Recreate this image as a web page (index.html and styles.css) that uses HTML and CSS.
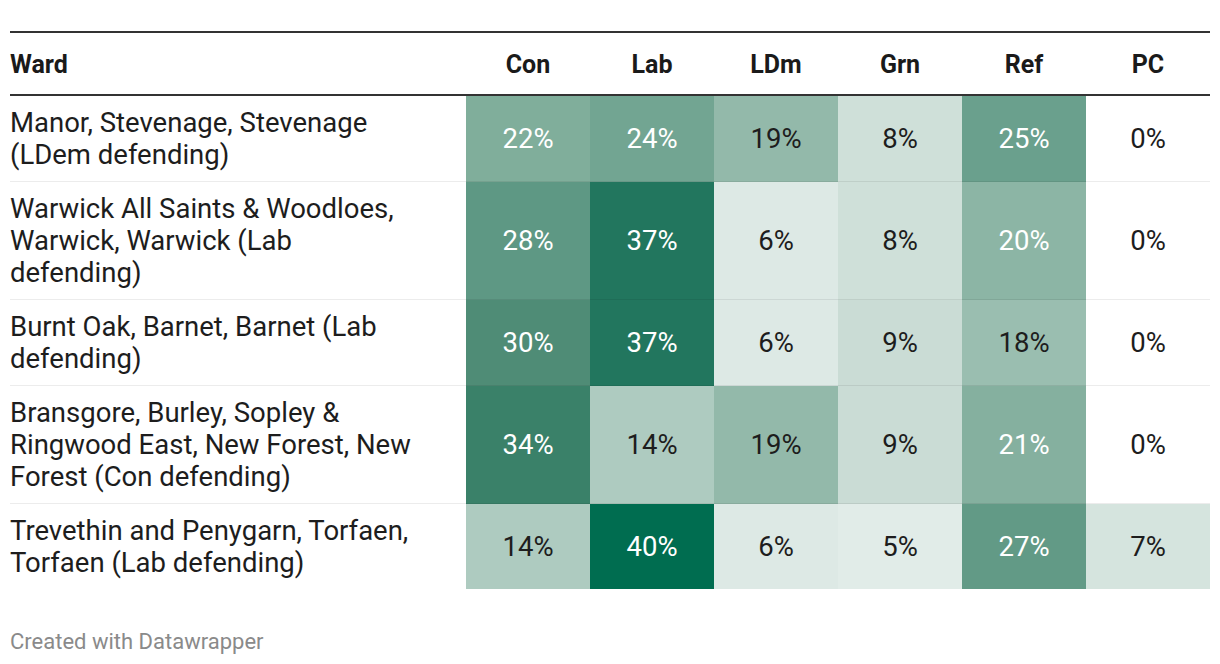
FILE: index.html
```html
<!DOCTYPE html>
<html>
<head>
<meta charset="utf-8">
<link rel="stylesheet" href="styles.css">
</head>
<body>
<div class="chart">
  <table class="tbl">
    <thead>
      <tr>
        <th class="ward">Ward</th>
        <th>Con</th>
        <th>Lab</th>
        <th>LDm</th>
        <th>Grn</th>
        <th>Ref</th>
        <th>PC</th>
      </tr>
    </thead>
    <tbody>
      <tr>
        <td class="ward">Manor, Stevenage, Stevenage (LDem defending)</td>
        <td class="c22 lt">22%</td>
        <td class="c24 lt">24%</td>
        <td class="c19">19%</td>
        <td class="c8">8%</td>
        <td class="c25 lt">25%</td>
        <td class="c0">0%</td>
      </tr>
      <tr>
        <td class="ward">Warwick All Saints &amp; Woodloes, Warwick, Warwick (Lab defending)</td>
        <td class="c28 lt">28%</td>
        <td class="c37 lt">37%</td>
        <td class="c6">6%</td>
        <td class="c8">8%</td>
        <td class="c20 lt">20%</td>
        <td class="c0">0%</td>
      </tr>
      <tr>
        <td class="ward">Burnt Oak, Barnet, Barnet (Lab defending)</td>
        <td class="c30 lt">30%</td>
        <td class="c37 lt">37%</td>
        <td class="c6">6%</td>
        <td class="c9">9%</td>
        <td class="c18">18%</td>
        <td class="c0">0%</td>
      </tr>
      <tr>
        <td class="ward">Bransgore, Burley, Sopley &amp; Ringwood East, New Forest, New Forest (Con defending)</td>
        <td class="c34 lt">34%</td>
        <td class="c14">14%</td>
        <td class="c19">19%</td>
        <td class="c9">9%</td>
        <td class="c21 lt">21%</td>
        <td class="c0">0%</td>
      </tr>
      <tr class="last">
        <td class="ward">Trevethin and Penygarn, Torfaen, Torfaen (Lab defending)</td>
        <td class="c14">14%</td>
        <td class="c40 lt">40%</td>
        <td class="c6">6%</td>
        <td class="c5">5%</td>
        <td class="c27 lt">27%</td>
        <td class="c7">7%</td>
      </tr>
    </tbody>
  </table>
  <div class="footer">Created with Datawrapper</div>
</div>
</body>
</html>
```

FILE: styles.css
```css
html, body {
  margin: 0;
  padding: 0;
  background: #ffffff;
}

.chart {
  padding: 31px 10px 0 10px;
  font-family: Roboto, "Liberation Sans", sans-serif;
  color: #1d1d1d;
}

.tbl {
  width: 1200px;
  border-collapse: collapse;
  table-layout: fixed;
  border-top: 2px solid #333333;
}

.tbl th {
  font-size: 25px;
  font-weight: 700;
  height: 59px;
  padding: 2px 0 0 0;
  text-align: center;
  width: 124px;
  border-bottom: 2px solid #333333;
  color: #1a1a1a;
}

.tbl th.ward {
  width: 456px;
  text-align: left;
}

.tbl td {
  font-size: 27.5px;
  line-height: 32px;
  padding: 11px 0 10px 0;
  text-align: center;
  border-bottom: 1px solid rgba(0, 0, 0, 0.075);
  color: #1d1d1d;
}

.tbl td.ward {
  text-align: left;
  padding-right: 38px;
}

.tbl tr.last td {
  border-bottom: none;
}

.tbl td.lt { color: #ffffff; }

.c0 { background: #ffffff; }
.c5 { background: #e1ece8; }
.c6 { background: #dde9e5; }
.c7 { background: #d5e4de; }
.c8 { background: #cfe0d9; }
.c9 { background: #cadcd5; }
.c14 { background: #aecbc0; }
.c18 { background: #9abeb0; }
.c19 { background: #93b9aa; }
.c20 { background: #8cb5a5; }
.c21 { background: #85b09f; }
.c22 { background: #80ae9b; }
.c24 { background: #72a592; }
.c25 { background: #6aa08d; }
.c27 { background: #629a86; }
.c28 { background: #5e9884; }
.c30 { background: #4f8c76; }
.c34 { background: #3a8169; }
.c37 { background: #22765e; }
.c40 { background: #006d50; }

.footer {
  margin-top: 40px;
  font-size: 22px;
  color: #8a8a8a;
}
```
